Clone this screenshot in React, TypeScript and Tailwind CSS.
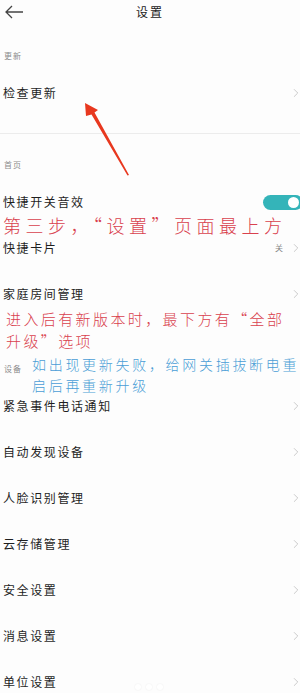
import { ChevronRight } from "lucide-react";

// A plain settings row: label on the left, optional value and a chevron on the right
const Row = ({ label, value, chevron = true }: { label: string; value?: string; chevron?: boolean }) => (
    <div className="h-[46px] flex items-center justify-between pl-[3px]">
        <span className="text-[12px] tracking-[1.6px] text-[#1f1f1f]">{label}</span>
        <div className="flex items-center gap-[6px] -mr-[3px]">
            {value && <span className="text-[8px] text-[#8a8a8a]">{value}</span>}
            {chevron && <ChevronRight size={14} strokeWidth={1.2} className="text-[#b5b5b5]" />}
        </div>
    </div>
);

// Small grey section title, text sits near the bottom of the block
const Section = ({ title, h }: { title: string; h: string }) => (
    <div className={`${h} flex items-end pb-[8px] pl-[4px]`}>
        <span className="text-[8px] leading-[12px] tracking-[1px] text-[#8c8c8c]">{title}</span>
    </div>
);

export default function App() {
    return (
        <div className="relative w-[300px] h-[693px] overflow-hidden bg-[#fdfdfd] font-['Noto_Sans_CJK_SC',sans-serif]">
            {/* Header */}
            <div className="h-[24px] flex items-center justify-center relative">
                <svg className="absolute left-[4px] top-[5px]" width="20" height="14" viewBox="0 0 20 14">
                    <path d="M19 7 H2 M8 1 L2 7 L8 13" fill="none" stroke="#444" strokeWidth="1.3" />
                </svg>
                <span className="text-[12px] tracking-[2px] text-[#1a1a1a]">设置</span>
            </div>

            <Section title="更新" h="h-[46px]" />
            <Row label="检查更新" />
            <div className="h-[17px]" />
            <div className="h-px bg-[#ececec]" />

            <Section title="首页" h="h-[45px]" />
            <div className="h-[46px] flex items-center justify-between pl-[3px]">
                <span className="text-[12px] tracking-[1.6px] text-[#1f1f1f]">快捷开关音效</span>
                <div className="w-[40px] h-[15px] rounded-full bg-[#34b4b9] flex items-center justify-end pr-[4px] -mr-[3px]">
                    <div className="w-[11px] h-[11px] rounded-full bg-white" />
                </div>
            </div>
            <Row label="快捷卡片" value="关" />
            <Row label="家庭房间管理" />

            <Section title="设备" h="h-[66px]" />
            <Row label="紧急事件电话通知" />
            <Row label="自动发现设备" />
            <Row label="人脸识别管理" />
            <Row label="云存储管理" />
            <Row label="安全设置" />
            <Row label="消息设置" />
            <Row label="单位设置" />

            {/* page dots at the bottom */}
            <div className="absolute left-[135px] top-[684px] flex gap-[5px]">
                <div className="w-[6px] h-[6px] rounded-full bg-white shadow-[0_0_2px_#ebebeb]" />
                <div className="w-[6px] h-[6px] rounded-full bg-white shadow-[0_0_2px_#ebebeb]" />
                <div className="w-[6px] h-[6px] rounded-full bg-white shadow-[0_0_2px_#ebebeb]" />
            </div>

            {/* Tutorial annotations over the page */}
            <svg className="absolute left-0 top-0 pointer-events-none" width="300" height="693">
                <polygon points="85,103 98,110 94.5,112.5 129,175 127.5,175.5 91.5,114.5 86,116" fill="#e8381f" />
            </svg>

            <div className="absolute left-[3px] top-[213px] text-[18px] leading-[24px] tracking-[4.5px] font-light text-[#d9414e] whitespace-nowrap">
                第三步，“设置”页面最上方
            </div>

            <div className="absolute left-[6px] top-[308px] w-[294px] text-[15px] leading-[22px] tracking-[2.4px] font-light text-[#d9414e]">
                进入后有新版本时，最下方有“全部
                <br />
                升级”选项
            </div>

            <div className="absolute left-[32px] top-[354px] text-[14px] leading-[21px] tracking-[2.7px] font-light text-[#4a9ed6] whitespace-nowrap">
                如出现更新失败，给网关插拔断电重
                <br />
                启后再重新升级
            </div>
        </div>
    );
}
